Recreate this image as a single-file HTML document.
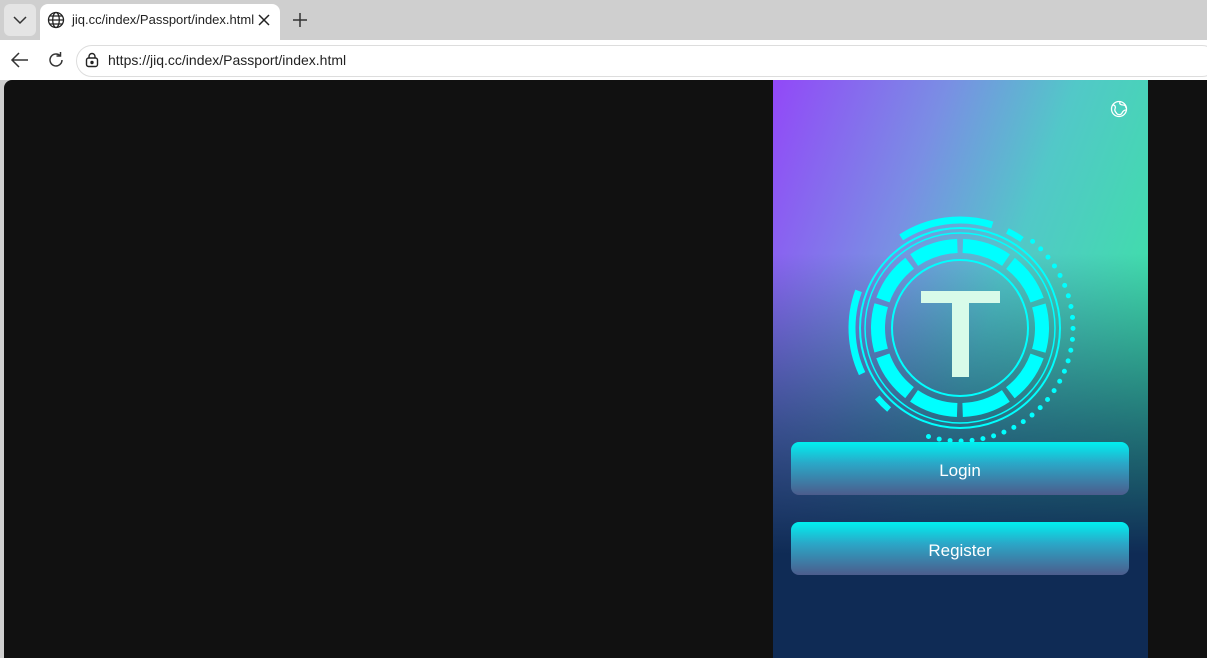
<!DOCTYPE html>
<html><head><style>
body{margin:0;width:1207px;height:658px;overflow:hidden;background:#cfcfcf;font-family:"Liberation Sans",sans-serif;position:relative}
.tabbar{position:absolute;left:0;top:0;width:1207px;height:40px;background:#cfcfcf}
.tab{position:absolute;left:40px;top:4px;width:240px;height:36px;background:#fff;border-radius:8px 8px 0 0}
.addr{position:absolute;left:0;top:40px;width:1207px;height:40px;background:#fff}
.url{position:absolute;left:76px;top:45px;width:1140px;height:30px;border:1px solid #ddd;border-radius:16px;background:#fff}
.page{position:absolute;left:4px;top:80px;width:1203px;height:578px;background:#111;border-radius:8px 0 0 0}
.panel{position:absolute;left:773px;top:80px;width:375px;height:578px;overflow:hidden;
background:linear-gradient(180deg,rgba(15,42,85,0) 0%,rgba(15,42,85,0) 30%,rgba(20,55,95,.65) 60%,#0f2b55 82%),
linear-gradient(110deg,#9248f8 0%,#7a8ee4 30%,#52c8c8 52%,#30f090 100%)}
.btn{position:absolute;left:18px;width:338px;height:53px;border-radius:8px;background:linear-gradient(180deg,#00f0f0 0%,#2aa8c8 40%,#4c5c8c 100%);color:#fff;font-size:17px;text-align:center;line-height:58px}
</style></head><body>
<div class="tabbar">
<div style="position:absolute;left:4px;top:4px;width:32px;height:32px;background:#e4e4e4;border-radius:6px"></div>
<svg style="position:absolute;left:13px;top:15px" width="14" height="10"><path d="M1 2 L7 8 L13 2" stroke="#333" stroke-width="1.5" fill="none"/></svg>
<div class="tab"></div>
<svg style="position:absolute;left:47px;top:11px" width="18" height="18" fill="none" stroke="#222" stroke-width="1.3"><circle cx="9" cy="9" r="7.5"/><ellipse cx="9" cy="9" rx="3.3" ry="7.5"/><path d="M1.5 9H16.5M3 5h12M3 13h12"/></svg>
<div style="position:absolute;left:72px;top:12px;font-size:13px;color:#222">jiq.cc/index/Passport/index.html</div>
<svg style="position:absolute;left:258px;top:14px" width="12" height="12" stroke="#222" stroke-width="1.5"><path d="M1 1L11 11M11 1L1 11"/></svg>
<svg style="position:absolute;left:292px;top:12px" width="16" height="16" stroke="#333" stroke-width="1.5"><path d="M8 1V15M1 8H15"/></svg>
</div>
<div class="addr"></div>
<svg style="position:absolute;left:10px;top:51px" width="20" height="18" fill="none" stroke="#333" stroke-width="1.5"><path d="M18 9H2M9 2L2 9L9 16"/></svg>
<svg style="position:absolute;left:47px;top:51px" width="18" height="18" fill="none" stroke="#333" stroke-width="1.5"><path d="M15 9A6 6 0 1 1 13 4.5"/><path d="M13.5 1V5H9.5"/></svg>
<div class="url"></div>
<svg style="position:absolute;left:84px;top:52px" width="16" height="16" fill="none" stroke="#222" stroke-width="1.4"><rect x="2.5" y="6" width="11" height="8.5" rx="2"/><path d="M5 6V4.5a3 3 0 0 1 6 0V6"/><circle cx="8" cy="10.5" r="1" fill="#222"/></svg>
<div style="position:absolute;left:108px;top:52px;font-size:14px;color:#222">https://jiq.cc/index/Passport/index.html</div>
<div class="page"></div>
<div class="panel">
<svg style="position:absolute;left:337px;top:20px" width="18" height="18" fill="none" stroke="#fff" stroke-width="1.3"><circle cx="9" cy="9" r="7.5"/><path d="M3 5c2 0 3 2 2 4s1 3 2 5M10 2c-1 2 1 3 3 3s3 1 3 3M16 10c-2 0-3 1-4 3s-3 2-5 1"/></svg>
<svg style="position:absolute;left:67px;top:128px" width="240" height="240" viewBox="-120 -120 240 240" fill="none" stroke="#00ffff">
<circle r="108" stroke-width="7" stroke-dasharray="95 1000" transform="rotate(-123)"/>
<circle r="108" stroke-width="6" stroke-dasharray="17 1000" transform="rotate(-64)"/>
<circle r="108" stroke-width="7" stroke-dasharray="85 1000" transform="rotate(155)"/>
<circle r="108" stroke-width="6" stroke-dasharray="17 1000" transform="rotate(131)"/>
<path d="M72.6 -86.6 A113 113 0 0 1 -38.6 106.2" stroke-width="5" stroke-linecap="round" stroke-dasharray="0 11"/>
<circle r="100" stroke-width="2"/>
<circle r="95" stroke-width="1.5"/>
<circle r="82" stroke-width="14" stroke-dasharray="46 5.5" transform="rotate(-88)"/>
<circle r="68" stroke-width="2"/>
</svg>
<div style="position:absolute;left:148px;top:211px;width:79px;height:12px;background:#d8fbe9"></div>
<div style="position:absolute;left:179px;top:211px;width:17px;height:86px;background:#d8fbe9"></div>
<div class="btn" style="top:362px">Login</div>
<div class="btn" style="top:442px">Register</div>
</div>
</body></html>
